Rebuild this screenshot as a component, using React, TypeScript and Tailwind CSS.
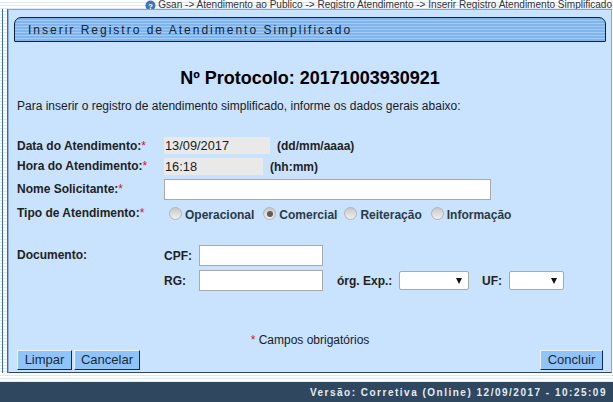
import React from 'react';

const Req = () => <span className="text-[#d01818] font-normal">*</span>;

const Field = ({ className }: { className: string }) => (
  <div className={`h-[21px] bg-white border border-[#a9a9a9] ${className}`} />
);

const SelectBox = ({ className }: { className: string }) => (
  <div className={`h-[19px] bg-white border border-[#a9a9a9] rounded-[2px] flex items-center justify-end pr-[6px] ${className}`}>
    <svg width="6" height="6" viewBox="0 0 6 6">
      <path d="M0 0H6L3 6Z" fill="#111" />
    </svg>
  </div>
);

const Radio = ({ checked }: { checked?: boolean }) => (
  <span className="w-[13px] h-[13px] mb-[3px] rounded-full border border-[#b4b4b4] bg-[linear-gradient(180deg,#c8c8c8,#f0f0f0)] flex items-center justify-center shrink-0">
    {checked && <span className="w-[6px] h-[6px] rounded-full bg-[#5e5e5e]" />}
  </span>
);

const Btn = ({ label, className }: { label: string; className: string }) => (
  <div className={`h-[20px] bg-[#90c4f8] border border-t-[#e8f4ff] border-l-[#e8f4ff] border-r-[#0a2a6a] border-b-[#0a2a6a] flex items-center justify-center text-[13px] text-[#1a2a3a] ${className}`}>
    {label}
  </div>
);

const App = () => {
  const stripes = 'bg-[repeating-linear-gradient(180deg,#ffffff_0px,#ffffff_2px,#dbe8f6_2px,#dbe8f6_3px)]';
  const label = 'text-[12px] font-bold text-[#222]';
  return (
    <div className="w-[613px] h-[402px] overflow-hidden bg-white flex flex-col font-['Liberation_Sans',Arial,sans-serif] text-[#1b1b1b]">
      <div className={`h-[9px] shrink-0 flex justify-end items-start pr-[1px] text-[10.05px] leading-none text-[#333] ${stripes}`}>
        <div className="flex items-center gap-[2px] whitespace-nowrap">
          <svg width="11" height="11" viewBox="0 0 11 11">
            <circle cx="5.5" cy="5.5" r="5" fill="#3f74b8" />
            <text x="5.5" y="8.5" textAnchor="middle" fontSize="8" fontWeight="bold" fill="#fff">?</text>
          </svg>
          <span>Gsan -&gt; Atendimento ao Publico -&gt; Registro Atendimento -&gt; Inserir Registro Atendimento Simplificado</span>
        </div>
      </div>

      <div className="h-[364px] shrink-0 flex">
        <div className={`w-[3px] border-r border-[#3c6aa8] ${stripes}`} />
        <div className={`w-[5px] border-r border-[#3c6aa8] ${stripes}`} />
        <div className="w-[604px] bg-[#c9e2fd] border-l border-t border-b border-r border-l-[#8fb4dc] border-t-[#7fa8d0] border-b-[#2f4860] border-r-[#8fa8c0] px-[5px] pt-[7px] flex flex-col">
          <div className="h-[25px] shrink-0 bg-[repeating-linear-gradient(180deg,#7fb4ec_0px,#7fb4ec_2px,#a4cbf3_2px,#a4cbf3_3px)] border border-[#0c2340] rounded-tl-[7px] rounded-tr-[7px] rounded-bl-[1px] rounded-br-[1px] flex items-center pl-[13px] text-[12px] tracking-[2px] text-[#10233a] whitespace-nowrap">
            Inserir Registro de Atendimento Simplificado
          </div>

          <h1 className="mt-[26px] h-[20px] leading-[20px] text-center text-[18px] font-bold text-black">
            Nº Protocolo: 20171003930921
          </h1>
          <p className="mt-[11px] ml-[3px] text-[12px] leading-[15px]">
            Para inserir o registro de atendimento simplificado, informe os dados gerais abaixo:
          </p>

          <div className="mt-[22px] ml-[3px] flex flex-col">
            <div className="flex items-center h-[19px]">
              <div className={`w-[147px] ${label}`}>Data do Atendimento:<Req /></div>
              <div className="w-[106px] h-[17px] bg-[#e9e9e9] pl-[1px] text-[12.8px] leading-[17px]">13/09/2017</div>
              <div className={`ml-[7px] ${label}`}>(dd/mm/aaaa)</div>
            </div>
            <div className="flex items-center h-[19px] mt-[2px]">
              <div className={`w-[147px] mb-[2px] ${label}`}>Hora do Atendimento:<Req /></div>
              <div className="w-[99px] h-[17px] bg-[#e9e9e9] pl-[1px] text-[12.8px] leading-[17px]">16:18</div>
              <div className={`ml-[7px] ${label}`}>(hh:mm)</div>
            </div>
            <div className="flex items-center h-[21px] mt-[3px]">
              <div className={`w-[147px] mb-[2px] ${label}`}>Nome Solicitante:<Req /></div>
              <Field className="w-[327px]" />
            </div>
            <div className="flex items-center h-[18px] mt-[4px]">
              <div className={`w-[152px] ${label}`}>Tipo de Atendimento:<Req /></div>
              <div className="flex items-center pt-[4px] text-[12px] font-bold text-[#2a3a4a]">
                <Radio /><span className="ml-[3px] mr-[9px]">Operacional</span>
                <Radio checked /><span className="ml-[3px] mr-[7px]">Comercial</span>
                <Radio /><span className="ml-[3px] mr-[9px]">Reiteração</span>
                <Radio /><span className="ml-[3px]">Informação</span>
              </div>
            </div>

            <div className="flex items-center h-[21px] mt-[23px]">
              <div className={`w-[147px] mb-[2px] ${label}`}>Documento:</div>
              <div className={`w-[35px] ${label}`}>CPF:</div>
              <Field className="w-[124px]" />
            </div>
            <div className="flex items-center h-[21px] mt-[4px]">
              <div className="w-[147px]" />
              <div className={`w-[35px] ${label}`}>RG:</div>
              <Field className="w-[124px]" />
              <div className={`w-[76px] pl-[14px] ${label}`}>órg. Exp.:</div>
              <SelectBox className="w-[70px]" />
              <div className={`w-[40px] pl-[13px] ${label}`}>UF:</div>
              <SelectBox className="w-[55px]" />
            </div>
          </div>

          <p className="mt-[42px] text-center text-[12px] leading-[15px]"><Req /> Campos obrigatórios</p>

          <div className="mt-[2px] ml-[3px] mr-[3px] flex">
            <Btn label="Limpar" className="w-[55px]" />
            <Btn label="Cancelar" className="w-[66px] ml-[2px]" />
            <Btn label="Concluir" className="w-[63px] ml-auto" />
          </div>
        </div>
      </div>

      <div className={`h-[9px] shrink-0 ${stripes}`} />
      <div className="flex-1 bg-[#2f4860] flex items-center justify-end pr-[6px] text-[10px] font-bold tracking-[1.5px] text-[#e4ecf4] whitespace-nowrap">
        Versão: Corretiva (Online) 12/09/2017 - 10:25:09
      </div>
    </div>
  );
};

export default App;
